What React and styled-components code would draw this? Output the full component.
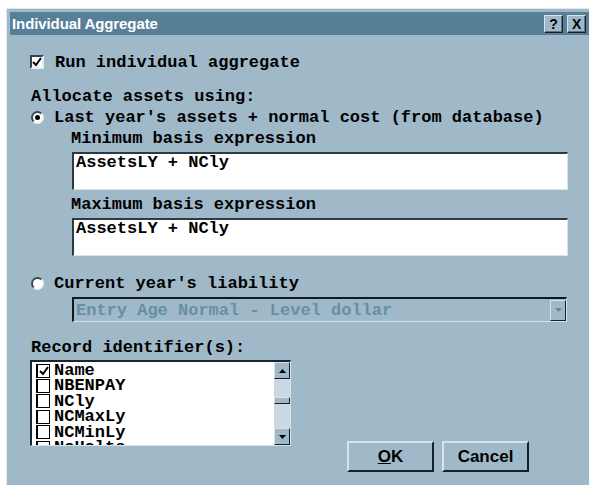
import React from 'react'
import styled, { createGlobalStyle } from 'styled-components'

const FACE = '#9fb9c8'
const HILITE = '#d6e3ea'
const SHADOW = '#16222a'
const CAPTION = '#587f98'
const MONO = '"Liberation Mono", "DejaVu Sans Mono", monospace'
const SANS = '"Liberation Sans", Arial, sans-serif'

const GlobalStyle = createGlobalStyle`
  html, body {
    margin: 0;
    background: #fff;
    overflow: hidden;
  }
`

const Window = styled.div`
  margin: 8px 0 0 6px;
  height: 477px;
  box-sizing: border-box;
  border-top: 1px solid #dfe8ee;
  border-left: 1px solid #dfe8ee;
  padding: 3px 0 0 3px;
  background: ${FACE};
  display: flex;
  flex-direction: column;
`

const TitleBar = styled.div`
  height: 23px;
  flex: none;
  background: ${CAPTION};
  display: flex;
  align-items: center;
  padding: 0 3px 0 2px;
  color: #fff;
  font: bold 15px ${SANS};
  letter-spacing: -0.1px;
`

const Caption = styled.span`
  flex: 1;
`

const CaptionButton = styled.span`
  width: 19px;
  height: 18px;
  margin-left: 4px;
  box-sizing: border-box;
  background: ${FACE};
  border: 1px solid;
  border-color: ${HILITE} ${SHADOW} ${SHADOW} ${HILITE};
  box-shadow: inset -1px -1px 0 #5d7585;
  color: #000;
  font: bold 14px ${SANS};
  display: flex;
  align-items: center;
  justify-content: center;
`

const Body = styled.div`
  padding: 17px 0 0 20px;
  font: bold 17px ${MONO};
  color: #000;
`

const Row = styled.div`
  display: flex;
  align-items: center;
  gap: 11px;
  height: ${p => p.$h || 21}px;
  margin-top: ${p => p.$top || 0}px;
  margin-left: ${p => p.$left || 0}px;
  white-space: pre;
`

const Label = styled.div`
  height: 21px;
  line-height: 21px;
  margin-top: ${p => p.$top || 0}px;
  margin-left: ${p => p.$left || 1}px;
  white-space: pre;
`

const Indent = styled.div`
  padding-left: 40px;
`

const CheckBox = styled.span`
  width: 14px;
  height: 14px;
  flex: none;
  box-sizing: border-box;
  background: #fff;
  border: 2px solid;
  border-color: #33434d #e6eef3 #e6eef3 #33434d;
  display: flex;
  align-items: center;
  justify-content: center;
`

const Radio = styled.span`
  width: 13px;
  height: 13px;
  flex: none;
  margin-left: 1px;
  margin-right: -1px;
  box-sizing: border-box;
  border-radius: 50%;
  background: #fff;
  border: 2px solid;
  border-color: #3a4a54 #eef4f7 #eef4f7 #3a4a54;
  display: flex;
  align-items: center;
  justify-content: center;

  &::after {
    content: '';
    width: 5px;
    height: 5px;
    border-radius: 50%;
    background: ${p => (p.$on ? '#000' : 'transparent')};
  }
`

const Field = styled.div`
  margin: ${p => p.$top}px 0 0 2px;
  width: 496px;
  height: 38px;
  box-sizing: border-box;
  background: #fff;
  border-style: solid;
  border-width: 2px 1px 1px 2px;
  border-color: #2b3a43 ${HILITE} ${HILITE} #2b3a43;
  padding: 0 2px;
  line-height: 18px;
  white-space: pre;
`

const Select = styled.div`
  margin: 3px 0 0 2px;
  width: 495px;
  height: 25px;
  box-sizing: border-box;
  display: flex;
  align-items: center;
  border-style: solid;
  border-width: 2px 1px 1px 2px;
  border-color: #101a20 ${HILITE} ${HILITE} #101a20;
  padding-left: 2px;
  color: #668fa6;
  white-space: pre;
`

const SelectArrow = styled.span`
  margin-left: auto;
  width: 16px;
  height: 21px;
  box-sizing: border-box;
  border: 1px solid;
  border-color: ${HILITE} ${SHADOW} ${SHADOW} ${HILITE};
  display: flex;
  align-items: center;
  justify-content: center;
`

const BottomRow = styled.div`
  display: flex;
  align-items: flex-start;
  margin-top: 2px;
`

const ListBox = styled.div`
  width: 261px;
  height: 86px;
  box-sizing: border-box;
  background: #fff;
  border-style: solid;
  border-width: 2px 1px 1px 2px;
  border-color: #1a262e ${HILITE} ${HILITE} #1a262e;
  display: flex;
  overflow: hidden;
`

const Items = styled.div`
  flex: 1;
  padding: 1px 0 0 4px;
  overflow: hidden;
`

const Item = styled.div`
  height: 15.4px;
  display: flex;
  align-items: center;
  gap: 4px;
  line-height: 15.4px;
  white-space: pre;
`

const ItemCheck = styled.span`
  width: 14px;
  height: 14px;
  flex: none;
  box-sizing: border-box;
  border: 1px solid #000;
  border-left-width: 2px;
  background: #fff;
  display: flex;
  align-items: center;
  justify-content: center;
`

const ScrollBar = styled.div`
  width: 16px;
  flex: none;
  background: #c9d8e1;
  display: flex;
  flex-direction: column;
`

const ScrollButton = styled.span`
  height: 17px;
  flex: none;
  box-sizing: border-box;
  background: ${FACE};
  border: 1px solid;
  border-color: ${HILITE} ${SHADOW} ${SHADOW} ${HILITE};
  display: flex;
  align-items: center;
  justify-content: center;
  margin-top: ${p => (p.$end ? 'auto' : '0')};
`

const Thumb = styled.span`
  height: 7px;
  margin-top: 18px;
  box-sizing: border-box;
  background: ${FACE};
  border: 1px solid;
  border-color: ${HILITE} ${SHADOW} ${SHADOW} ${HILITE};
`

const ButtonRow = styled.div`
  display: flex;
  gap: 8px;
  margin: 81px 0 0 56px;
`

const PushButton = styled.span`
  width: 87px;
  height: 31px;
  box-sizing: border-box;
  background: ${FACE};
  border: 2px solid;
  border-color: ${HILITE} ${SHADOW} ${SHADOW} ${HILITE};
  color: #000;
  font: bold 17px ${SANS};
  display: flex;
  align-items: center;
  justify-content: center;
`

const Tick = () => (
  <svg width="10" height="10" viewBox="0 0 10 10">
    <path d="M1 5 L4 8 L9 1" fill="none" stroke="#000" strokeWidth="2" />
  </svg>
)

const Arrow = ({ up, color = '#000' }) => (
  <svg width="7" height="4" viewBox="0 0 7 4">
    <path d={up ? 'M0 4 L3.5 0 L7 4 Z' : 'M0 0 L7 0 L3.5 4 Z'} fill={color} />
  </svg>
)

const identifiers = [
  { name: 'Name', on: true },
  { name: 'NBENPAY' },
  { name: 'NCly' },
  { name: 'NCMaxLy' },
  { name: 'NCMinLy' },
  { name: 'NoHolts' },
]

export default function App() {
  return (
    <>
      <GlobalStyle />
      <Window>
        <TitleBar>
          <Caption>Individual Aggregate</Caption>
          <CaptionButton>?</CaptionButton>
          <CaptionButton>X</CaptionButton>
        </TitleBar>

        <Body>
          <Row $h={20}>
            <CheckBox><Tick /></CheckBox>
            Run individual aggregate
          </Row>

          <Label $top={14}>Allocate assets using:</Label>
          <Row>
            <Radio $on />
            Last year's assets + normal cost (from database)
          </Row>
          <Indent>
            <Label $left={0}>Minimum basis expression</Label>
            <Field $top={3}>AssetsLY + NCly</Field>
            <Label $left={0} $top={4}>Maximum basis expression</Label>
            <Field $top={3}>AssetsLY + NCly</Field>
          </Indent>

          <Row $top={17}>
            <Radio />
            Current year's liability
          </Row>
          <Indent>
            <Select>
              Entry Age Normal - Level dollar
              <SelectArrow><Arrow color="#6b8797" /></SelectArrow>
            </Select>
          </Indent>

          <Label $top={15}>Record identifier(s):</Label>
          <BottomRow>
            <ListBox>
              <Items>
                {identifiers.map(item => (
                  <Item key={item.name}>
                    <ItemCheck>{item.on && <Tick />}</ItemCheck>
                    {item.name}
                  </Item>
                ))}
              </Items>
              <ScrollBar>
                <ScrollButton><Arrow up /></ScrollButton>
                <Thumb />
                <ScrollButton $end><Arrow /></ScrollButton>
              </ScrollBar>
            </ListBox>
            <ButtonRow>
              <PushButton><u>O</u>K</PushButton>
              <PushButton>Cancel</PushButton>
            </ButtonRow>
          </BottomRow>
        </Body>
      </Window>
    </>
  )
}
